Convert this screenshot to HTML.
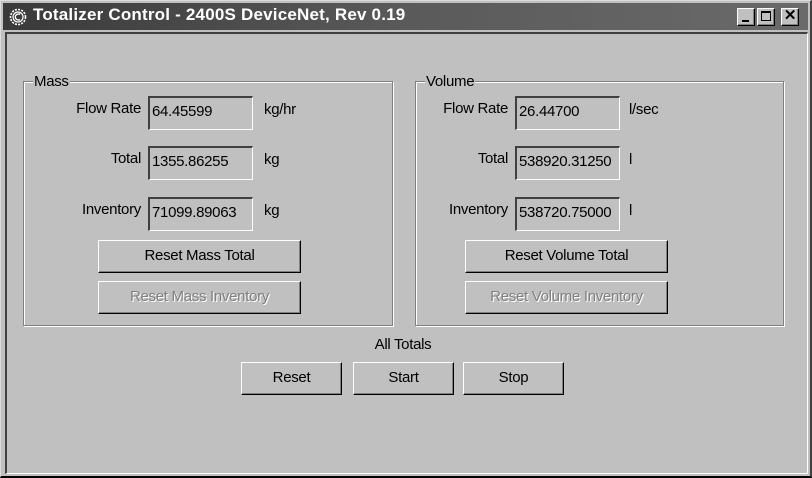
<!DOCTYPE html>
<html><head><style>
*{margin:0;padding:0;box-sizing:border-box}
body{width:812px;height:478px;background:#c0c0c0;position:relative;overflow:hidden;font-family:"Liberation Sans",Arial,sans-serif;font-size:15px;letter-spacing:-0.3px;color:#000}
.a{position:absolute}
#frame{left:0;top:0;width:812px;height:478px;border-top:1px solid #dcdcdc;border-left:1px solid #dcdcdc;border-right:2px solid #404040;border-bottom:2px solid #000;background:#c0c0c0}
#title{left:3px;top:3px;width:805px;height:27px;background:linear-gradient(90deg,#3a3a3a,#5a5a5a 50%,#6a6a6a);}
#ttext{left:33px;top:5px;color:#fff;font-weight:bold;font-size:17px;letter-spacing:0.2px}
#client{left:5px;top:32px;width:803px;height:442px;border-top:2px solid #404040;border-left:2px solid #404040;border-right:1px solid #fff;border-bottom:1px solid #fff}
.tb{width:18px;height:18px;top:8px;background:#c0c0c0;border-top:1px solid #fff;border-left:1px solid #fff;border-right:1px solid #000;border-bottom:1px solid #000;box-shadow:inset -1px -1px 0 #808080}
.grp{border:1px solid #808080;box-shadow:1px 1px 0 #fff,inset 1px 1px 0 #fff}
.glab{background:#c0c0c0;padding:0 1px}
.lbl{text-align:right;width:100px}
.ed{width:105px;height:34px;border-top:2px solid #404040;border-left:2px solid #404040;border-right:1px solid #fff;border-bottom:1px solid #fff;padding:5px 0 0 2px}
.btn{height:33px;border-top:1px solid #fff;border-left:1px solid #fff;border-right:1px solid #000;border-bottom:1px solid #000;box-shadow:inset -1px -1px 0 #808080;text-align:center;line-height:30px}
.dis{color:#808080;text-shadow:1px 1px 0 #fff}
</style></head><body>
<div class="a" id="frame"></div>
<div class="a" id="title"></div>
<svg class="a" style="left:9px;top:8px" width="18" height="18" viewBox="0 0 18 18"><circle cx="9" cy="9" r="7.5" fill="none" stroke="#fff" stroke-width="1.6" stroke-dasharray="2 1.2"/><circle cx="9" cy="9" r="5" fill="none" stroke="#fff" stroke-width="1.2"/><path d="M11 6.5 A3 3 0 1 0 11 11.5" fill="none" stroke="#fff" stroke-width="1.4"/></svg>
<div class="a" id="ttext">Totalizer Control - 2400S DeviceNet, Rev 0.19</div>
<div class="a tb" style="left:737px"><div class="a" style="left:4px;top:11px;width:7px;height:2px;background:#000"></div></div>
<div class="a tb" style="left:757px"><div class="a" style="left:3px;top:2px;width:10px;height:10px;border:1px solid #000;border-top-width:2px"></div></div>
<div class="a tb" style="left:781px;font-size:15px;font-weight:bold;line-height:14px;text-align:center">✕</div>
<div class="a" id="client"></div>

<div class="a grp" style="left:23px;top:81px;width:370px;height:245px"></div>
<div class="a glab" style="left:33px;top:73px">Mass</div>
<div class="a lbl" style="left:41px;top:100px">Flow Rate</div>
<div class="a ed" style="left:148px;top:96px">64.45599</div>
<div class="a" style="left:264px;top:101px">kg/hr</div>
<div class="a lbl" style="left:41px;top:150px">Total</div>
<div class="a ed" style="left:148px;top:146px">1355.86255</div>
<div class="a" style="left:264px;top:151px">kg</div>
<div class="a lbl" style="left:41px;top:201px">Inventory</div>
<div class="a ed" style="left:148px;top:197px">71099.89063</div>
<div class="a" style="left:264px;top:202px">kg</div>
<div class="a btn" style="left:98px;top:240px;width:203px">Reset Mass Total</div>
<div class="a btn dis" style="left:98px;top:281px;width:203px">Reset Mass Inventory</div>

<div class="a grp" style="left:415px;top:81px;width:369px;height:245px"></div>
<div class="a glab" style="left:425px;top:73px">Volume</div>
<div class="a lbl" style="left:408px;top:100px">Flow Rate</div>
<div class="a ed" style="left:515px;top:96px">26.44700</div>
<div class="a" style="left:629px;top:101px">l/sec</div>
<div class="a lbl" style="left:408px;top:150px">Total</div>
<div class="a ed" style="left:515px;top:146px">538920.31250</div>
<div class="a" style="left:629px;top:151px">l</div>
<div class="a lbl" style="left:408px;top:201px">Inventory</div>
<div class="a ed" style="left:515px;top:197px">538720.75000</div>
<div class="a" style="left:629px;top:202px">l</div>
<div class="a btn" style="left:465px;top:240px;width:203px">Reset Volume Total</div>
<div class="a btn dis" style="left:465px;top:281px;width:203px">Reset Volume Inventory</div>

<div class="a" style="left:353px;top:336px;width:100px;text-align:center">All Totals</div>
<div class="a btn" style="left:241px;top:362px;width:101px">Reset</div>
<div class="a btn" style="left:353px;top:362px;width:101px">Start</div>
<div class="a btn" style="left:463px;top:362px;width:101px">Stop</div>
</body></html>
